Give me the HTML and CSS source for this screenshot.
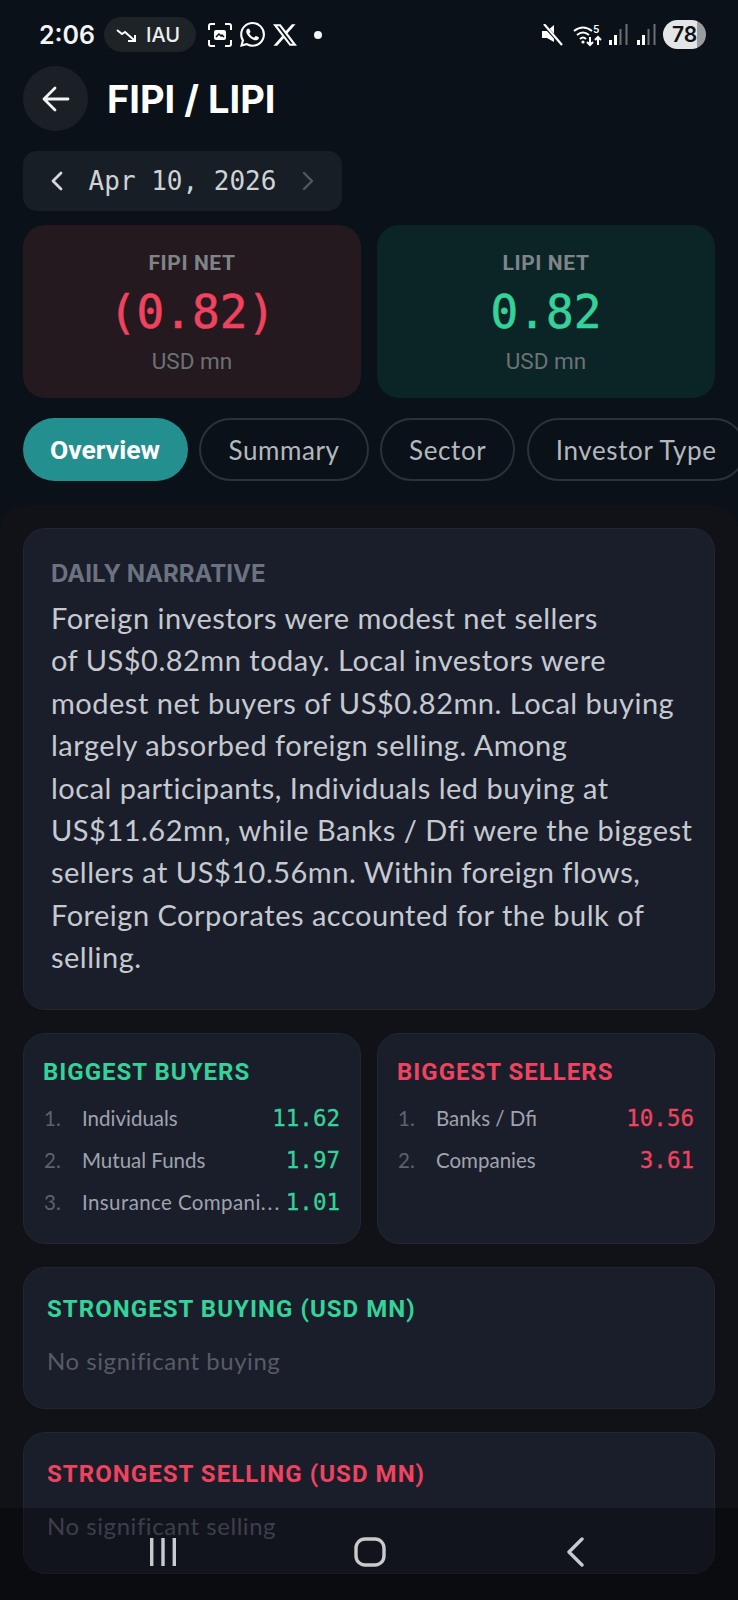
FILE: index.html
```html
<!DOCTYPE html>
<html>

<head>
    <meta charset="UTF-8">
    <title>FIPI / LIPI</title>
    <link rel="stylesheet" href="styles.css">
</head>

<body>
    <div class="status">
        <span class="time">2:06</span>
        <span class="ticker">
            <svg width="22" height="16" viewBox="0 0 22 16" fill="none" stroke="#fff" stroke-width="2"><path d="M1 3l5 4 3-2 9 8"/><path d="M12 14h7V8"/></svg>
            IAU
        </span>
        <svg class="shot" width="24" height="24" viewBox="0 0 24 24" fill="none" stroke="#fff" stroke-width="2"><path d="M1 7V3q0-2 2-2h4M17 1h4q2 0 2 2v4M23 17v4q0 2-2 2h-4M7 23H3q-2 0-2-2v-4"/><rect x="6" y="7" width="12" height="10" rx="2" fill="#fff" stroke="none"/><path d="M8 14l3-3 2 2 1-1 2 2" stroke="#0a1118" stroke-width="1.5"/></svg>
        <svg class="whats" width="25" height="25" viewBox="0 0 24 24" fill="#fff"><path d="M17.472 14.382c-.297-.149-1.758-.867-2.03-.967-.273-.099-.471-.148-.67.15-.197.297-.767.966-.94 1.164-.173.199-.347.223-.644.075-.297-.15-1.255-.463-2.39-1.475-.883-.788-1.48-1.761-1.653-2.059-.173-.297-.018-.458.13-.606.134-.133.298-.347.446-.52.149-.174.198-.298.298-.497.099-.198.05-.371-.025-.52-.075-.149-.669-1.612-.916-2.207-.242-.579-.487-.5-.669-.51-.173-.008-.371-.01-.57-.01-.198 0-.52.074-.792.372-.272.297-1.04 1.016-1.04 2.479 0 1.462 1.065 2.875 1.213 3.074.149.198 2.096 3.2 5.077 4.487.709.306 1.262.489 1.694.625.712.227 1.36.195 1.871.118.571-.085 1.758-.719 2.006-1.413.248-.694.248-1.289.173-1.413-.074-.124-.272-.198-.57-.347m-5.421 7.403h-.004a9.87 9.87 0 01-5.031-1.378l-.361-.214-3.741.982.998-3.648-.235-.374a9.86 9.86 0 01-1.51-5.26c.001-5.45 4.436-9.884 9.888-9.884 2.64 0 5.122 1.03 6.988 2.898a9.825 9.825 0 012.893 6.994c-.003 5.45-4.437 9.884-9.885 9.884m8.413-18.297A11.815 11.815 0 0012.05 0C5.495 0 .16 5.335.157 11.892c0 2.096.547 4.142 1.588 5.945L.057 24l6.305-1.654a11.882 11.882 0 005.683 1.448h.005c6.554 0 11.89-5.335 11.893-11.893a11.821 11.821 0 00-3.48-8.413z"/></svg>
        <svg class="xlogo" width="24" height="24" viewBox="0 0 24 24" fill="#fff"><path d="M18.901 1.153h3.68l-8.04 9.19L24 22.846h-7.406l-5.8-7.584-6.638 7.584H.474l8.6-9.83L0 1.154h7.594l5.243 6.932ZM17.61 20.644h2.039L6.486 3.24H4.298Z"/></svg>
        <span class="dot"></span>
        <span class="spring"></span>
        <svg class="mute" width="22" height="22" viewBox="0 0 22 22" fill="#fff"><path d="M1 7h5l7-6v17l-7-4H1z"/><path d="M2 0l19 21" stroke="#0a1118" stroke-width="3.4"/><path d="M3 0l18 21" stroke="#fff" stroke-width="2.2"/></svg>
        <svg class="wifi" width="29" height="24" viewBox="0 0 29 24" fill="none" stroke="#fff" stroke-width="2"><path d="M1 8q9-7 18 0M4 12q6-5 12 0M7 16q3-3 6 0"/><circle cx="10" cy="19" r="1.6" fill="#fff" stroke="none"/><path d="M17 14v8M14 19l3 3 3-3M25 22v-8M22 17l3-3 3 3"/><text x="20" y="10" class="wifi-num">5</text></svg>
        <svg class="bars" width="19" height="21" viewBox="0 0 19 21"><rect x="0" y="16" width="3" height="5" fill="#fff"/><rect x="5" y="11" width="3" height="10" fill="#fff"/><rect x="10.5" y="5" width="2" height="16" fill="#6b7075"/><rect x="16.5" y="0" width="2" height="21" fill="#6b7075"/></svg>
        <svg class="bars" width="19" height="21" viewBox="0 0 19 21"><rect x="0" y="16" width="3" height="5" fill="#fff"/><rect x="5" y="11" width="3" height="10" fill="#fff"/><rect x="10.5" y="5" width="2" height="16" fill="#6b7075"/><rect x="16.5" y="0" width="2" height="21" fill="#6b7075"/></svg>
        <span class="battery">78</span>
    </div>

    <div class="top">
        <div class="head">
            <button class="back">
                <svg width="28" height="28" viewBox="0 0 28 28" fill="none" stroke="#f2f4f5" stroke-width="2.8" stroke-linecap="round" stroke-linejoin="round"><path d="M2 14h24M13 3L2 14l11 11"/></svg>
            </button>
            <h1>FIPI / LIPI</h1>
        </div>

        <div class="date">
            <svg width="14" height="20" viewBox="0 0 14 20" fill="none" stroke="#d5d8da" stroke-width="2.8" stroke-linecap="round" stroke-linejoin="round"><path d="M11 2L3 10l8 8"/></svg>
            <span>Apr 10, 2026</span>
            <svg width="14" height="20" viewBox="0 0 14 20" fill="none" stroke="#53585d" stroke-width="2.4" stroke-linecap="round" stroke-linejoin="round"><path d="M3 2l8 8-8 8"/></svg>
        </div>

        <div class="two">
            <div class="net net-red">
                <div class="net-label">FIPI NET</div>
                <div class="net-value red">(0.82)</div>
                <div class="net-unit">USD mn</div>
            </div>
            <div class="net net-green">
                <div class="net-label">LIPI NET</div>
                <div class="net-value green">0.82</div>
                <div class="net-unit">USD mn</div>
            </div>
        </div>

        <div class="tabs">
            <div class="tab on">Overview</div>
            <div class="tab">Summary</div>
            <div class="tab">Sector</div>
            <div class="tab">Investor Type</div>
        </div>
    </div>

    <div class="sheet">
        <div class="card narrative">
            <div class="narrative-label">DAILY NARRATIVE</div>
            <p>Foreign investors were modest net sellers<br>of US$0.82mn today. Local investors were<br>modest net buyers of US$0.82mn. Local buying<br>largely absorbed foreign selling. Among<br>local participants, Individuals led buying at<br>US$11.62mn, while Banks / Dfi were the biggest<br>sellers at US$10.56mn. Within foreign flows,<br>Foreign Corporates accounted for the bulk of<br>selling.</p>
        </div>

        <div class="two">
            <div class="card rank">
                <div class="rank-title green">BIGGEST BUYERS</div>
                <div class="row"><span class="num">1.</span><span class="name">Individuals</span><span class="val green">11.62</span></div>
                <div class="row"><span class="num">2.</span><span class="name">Mutual Funds</span><span class="val green">1.97</span></div>
                <div class="row"><span class="num">3.</span><span class="name name-cut">Insurance Compani<span class="dots">...</span></span><span class="val green">1.01</span></div>
            </div>
            <div class="card rank">
                <div class="rank-title red">BIGGEST SELLERS</div>
                <div class="row"><span class="num">1.</span><span class="name">Banks / Dfi</span><span class="val red">10.56</span></div>
                <div class="row"><span class="num">2.</span><span class="name">Companies</span><span class="val red">3.61</span></div>
            </div>
        </div>

        <div class="card strong">
            <div class="strong-title green">STRONGEST BUYING (USD MN)</div>
            <div class="strong-none">No significant buying</div>
        </div>
        <div class="card strong">
            <div class="strong-title red">STRONGEST SELLING (USD MN)</div>
            <div class="strong-none">No significant selling</div>
        </div>
    </div>

    <div class="nav">
        <svg width="30" height="30" viewBox="0 0 30 30" fill="#c9cacb"><rect x="2" y="1" width="3.4" height="28"/><rect x="13.3" y="1" width="3.4" height="28"/><rect x="24.6" y="1" width="3.4" height="28"/></svg>
        <svg class="nav-home" width="32" height="30" viewBox="0 0 32 30" fill="none" stroke="#c9cacb" stroke-width="3.4"><rect x="2" y="2" width="28" height="26" rx="9"/></svg>
        <svg class="nav-back" width="20" height="30" viewBox="0 0 20 30" fill="none" stroke="#c9cacb" stroke-width="3.4" stroke-linecap="round" stroke-linejoin="round"><path d="M16 2L3 15l13 13"/></svg>
    </div>
</body>
</html>
```

FILE: styles.css
```css
* {
    box-sizing: border-box;
}
html, body {
    margin: 0;
    padding: 0;
}
body {
    position: relative;
    width: 738px;
    height: 1600px;
    overflow: hidden;
    background: #0a1118;
    color: #fff;
    font-family: 'Lato', 'Noto Sans', sans-serif;
}
.green {
    color: #34d399;
}
.red {
    color: #f0435f;
}

/* status bar */
.status {
    height: 66px;
    padding: 17px 32px 14px 39px;
    display: flex;
    align-items: center;
}
.time {
    font-family: 'Inter', sans-serif;
    font-size: 25px;
    font-weight: 600;
    color: #f4f5f6;
}
.ticker {
    width: 92px;
    height: 35px;
    margin-left: 9px;
    padding-right: 4px;
    display: flex;
    align-items: center;
    justify-content: center;
    gap: 8px;
    border-radius: 18px;
    background: #1e2327;
    font-family: 'Inter', sans-serif;
    font-size: 20px;
    font-weight: 500;
    color: #eceeef;
}
.shot {
    margin-left: 12px;
}
.whats {
    margin-left: 8px;
}
.xlogo {
    margin-left: 8px;
}
.dot {
    width: 8px;
    height: 8px;
    margin-left: 17px;
    border-radius: 50%;
    background: #f4f5f6;
}
.spring {
    flex: 1;
}
.mute {
    margin-right: 10px;
}
.wifi {
    margin-right: 7px;
}
.wifi-num {
    font-family: 'Roboto', sans-serif;
    font-size: 11px;
    font-weight: 500;
    fill: #fff;
    stroke: none;
}
.bars {
    margin-right: 9px;
}
.battery {
    width: 43px;
    height: 29px;
    margin-left: -2px;
    display: flex;
    align-items: center;
    justify-content: center;
    border-radius: 15px;
    background: linear-gradient(90deg, #e4e5e6 78%, #9a9c9e 78%);
    font-family: 'Inter', sans-serif;
    font-size: 21px;
    font-weight: 600;
    color: #0d1115;
}

/* header block */
.top {
    padding: 0 0 0 23px;
}
.head {
    display: flex;
    align-items: center;
    gap: 19px;
}
.back {
    width: 65px;
    height: 65px;
    padding: 0;
    display: flex;
    align-items: center;
    justify-content: center;
    border: 0;
    border-radius: 50%;
    background: #1b2026;
}
h1 {
    margin: 0;
    font-family: 'Inter', sans-serif;
    font-size: 38px;
    font-weight: 700;
    color: #fff;
}
.date {
    width: 319px;
    height: 60px;
    margin-top: 20px;
    padding: 0 27px 0 27px;
    display: flex;
    align-items: center;
    justify-content: space-between;
    border-radius: 14px;
    background: #181e25;
    font-family: 'DejaVu Sans Mono', monospace;
    font-size: 26px;
    color: #cfd3d6;
}
.two {
    display: grid;
    grid-template-columns: 338px 338px;
    gap: 16px;
}
.top .two {
    margin-top: 14px;
}
.net {
    height: 173px;
    padding-top: 26px;
    border-radius: 22px;
    text-align: center;
}
.net-red {
    background: #24191f;
}
.net-green {
    background: #0b2426;
}
.net-label {
    font-family: 'Roboto', sans-serif;
    font-size: 21px;
    font-weight: 700;
    letter-spacing: 0.6px;
    color: #7f8489;
}
.net-value {
    margin-top: 10px;
    font-family: 'DejaVu Sans Mono', monospace;
    font-size: 46px;
    line-height: 54px;
    -webkit-text-stroke: 0.6px currentColor;
}
.net-unit {
    margin-top: 9px;
    font-family: 'Roboto', sans-serif;
    font-size: 22.5px;
    color: #6d7277;
}
.tabs {
    margin-top: 20px;
    display: flex;
    gap: 11.5px;
    white-space: nowrap;
}
.tab {
    height: 63px;
    padding: 0 27px;
    display: flex;
    flex-shrink: 0;
    align-items: center;
    border: 2px solid #2c3238;
    border-radius: 32px;
    font-size: 26px;
    letter-spacing: 0.6px;
    color: #b4b8bc;
}
.tab.on {
    padding: 0 28px 0 27px;
    border: 0;
    background: #23908f;
    font-family: 'Roboto', sans-serif;
    font-size: 26.5px;
    font-weight: 700;
    letter-spacing: 0;
    color: #fff;
}

/* sheet with the cards */
.sheet {
    height: 1095px;
    margin-top: 24px;
    padding: 23px 23px 0;
    border-radius: 26px 26px 0 0;
    background: #101217;
}
.card {
    border: 1px solid #22262f;
    border-radius: 22px;
    background: #1a1e2a;
}
.narrative {
    height: 482px;
    margin-bottom: 23px;
    padding: 30px 0 0 27px;
}
.narrative-label {
    font-family: 'Inter', sans-serif;
    font-size: 24px;
    font-weight: 700;
    line-height: 30px;
    color: #6b7280;
}
.narrative p {
    margin: 8px 0 0;
    font-size: 29px;
    letter-spacing: 0.5px;
    line-height: 42.4px;
    white-space: nowrap;
    color: #c6c9d0;
}
.rank {
    height: 211px;
    padding: 24px 20px 0;
}
.rank-title {
    margin: 0 0 10px -1px;
    font-family: 'Roboto', sans-serif;
    font-size: 24px;
    font-weight: 700;
    letter-spacing: 1px;
    line-height: 29px;
}
.row {
    height: 42px;
    display: flex;
    align-items: center;
    font-size: 20.5px;
}
.num {
    width: 38px;
    flex-shrink: 0;
    color: #5d626d;
}
.name {
    flex: 1;
    white-space: nowrap;
    color: #9fa3ad;
}
.name-cut {
    letter-spacing: 0.4px;
}
.dots {
    letter-spacing: 2px;
}
.val {
    margin-left: 4px;
    font-family: 'DejaVu Sans Mono', monospace;
    font-size: 22.5px;
    -webkit-text-stroke: 0.3px currentColor;
}
.strong {
    height: 142px;
    margin-top: 23px;
    padding: 26px 23px 0;
}
.strong-title {
    font-family: 'Roboto', sans-serif;
    font-size: 24px;
    font-weight: 700;
    letter-spacing: 1.05px;
    line-height: 30px;
}
.strong-none {
    margin-top: 22px;
    font-size: 24px;
    letter-spacing: 0.55px;
    color: #565b66;
}

/* system nav over the page */
.nav {
    position: absolute;
    left: 0;
    right: 0;
    bottom: 0;
    height: 92px;
    padding: 29px 0 0 148px;
    display: flex;
    align-items: flex-start;
    background: rgba(0, 0, 0, 0.3);
}
.nav-home {
    margin-left: 176px;
}
.nav-back {
    margin-left: 180px;
}
```
